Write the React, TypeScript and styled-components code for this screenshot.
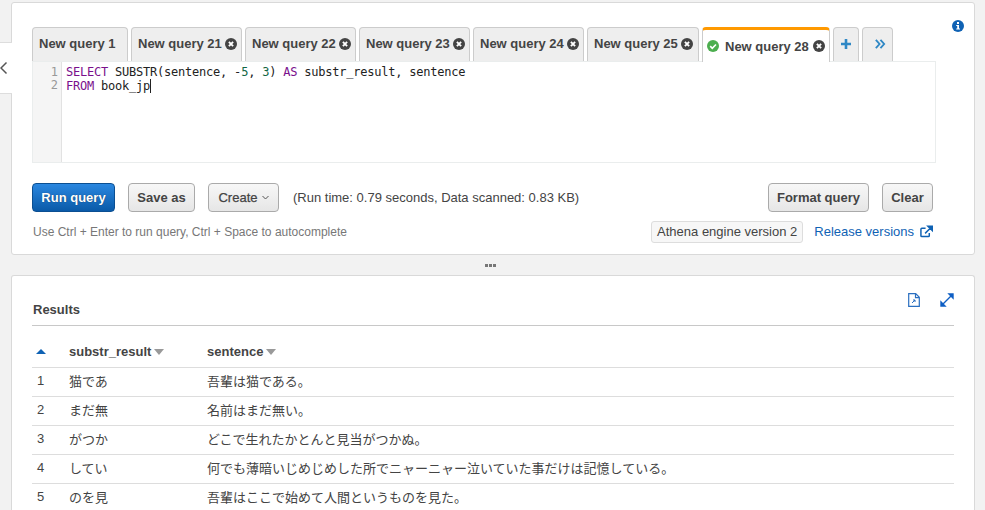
import React from "react";
import styled, { createGlobalStyle } from "styled-components";

const Global = createGlobalStyle`
  html, body { margin: 0; padding: 0; background: #f2f2f2; overflow: hidden; }
  body { font-family: "Liberation Sans", Arial, "Noto Sans CJK JP", sans-serif; color: #444; }
  * { box-sizing: border-box; }
`;
const Page = styled.div`
  position: relative; width: 985px; height: 510px; overflow: hidden;
  padding: 2px 10px 0 11px; display: flex; flex-direction: column;
`;
const SideToggle = styled.div`
  position: absolute; left: 0; top: 42px; width: 12px; height: 52px; background: #fff; z-index: 2;
  border-top: 1px solid #ddd; border-bottom: 1px solid #ddd;
  display: flex; align-items: center; color: #555;
`;
const Card = styled.section`
  position: relative; background: #fff; border: 1px solid #d9d9d9; border-radius: 3px;
`;
const QueryCard = styled(Card)`
  height: 253px; padding: 24px 38px 0 20px; flex: none;
`;
const ResultCard = styled(Card)`
  flex: 1; padding: 0 20px; border-bottom: 0; border-radius: 3px 3px 0 0;
`;
const InfoIcon = styled.div`
  position: absolute; right: 10px; top: 17px; display: flex;
`;
const Tabs = styled.div`
  display: flex; height: 34px; gap: 3px; align-items: stretch;
`;
const Tab = styled.div<{ $w: number; $active?: boolean }>`
  width: ${p => p.$w}px; display: flex; align-items: center; gap: 3px;
  padding: ${p => (p.$active ? "0 0 0 4px" : "0 0 2px 6px")};
  background: ${p => (p.$active ? "#fff" : "#eee")};
  border: 1px solid #ccc; border-bottom: 0; border-radius: 4px 4px 0 0;
  ${p => p.$active ? "border-top: 3px solid #f90; margin-bottom: -1px; z-index: 1;" : ""}
  font-size: 13px; font-weight: 700; color: #444;
  white-space: nowrap;
`;
const ActiveLabel = styled.span`
  margin-right: 1px;
`;
const StatusIcon = styled.svg`
  flex: none; margin-right: 3px;
`;
const PlainIcon = styled.svg<{ $ml?: number }>`
  flex: none; margin-left: ${p => p.$ml ?? 0}px;
`;
const Editor = styled.div`
  height: 102px; width: 904px; border: 1px solid #eaeded; display: flex;
  font-family: "DejaVu Sans Mono", "Liberation Mono", monospace; font-size: 12px; line-height: 13px;
`;
const Gutter = styled.div`
  width: 29px; background: #f5f5f5; border-right: 1px solid #e2e2e2; color: #999;
  text-align: right; padding: 4px 3px 0 0;
`;
const Code = styled.div`
  padding: 4px 0 0 4px; color: #222; white-space: pre; letter-spacing: -0.22px;
`;
const Kw = styled.span`color: #7a0f8c;`;
const Num = styled.span`color: #116644;`;
const Caret = styled.span`
  display: inline-block; width: 1px; height: 14px; background: #222; vertical-align: -3px;
`;
const ActionRow = styled.div`
  display: flex; align-items: center; margin-top: 20px; height: 29px; width: 901px;
`;
const Btn = styled.button<{ $w: number; $primary?: boolean }>`
  width: ${p => p.$w}px; height: 29px; padding: 0; border-radius: 4px; font: 700 13px "Liberation Sans", sans-serif;
  display: flex; align-items: center; justify-content: center; gap: 4px;
  ${p => p.$primary
    ? "color:#fff;background:linear-gradient(#2a87e0,#0a5aa8);border:1px solid #0b4f92;text-shadow:0 0 1px #0008;"
    : "color:#444;background:linear-gradient(#f7f7f7,#e6e6e6);border:1px solid #aaa;"}
`;
const CreateBtn = styled(Btn)`font-weight: 400; -webkit-text-stroke: 0.25px #444;`;
const RunInfo = styled.span`font-size: 13px; color: #444; margin-left: 14px;`;
const Gap = styled.div<{ $w: number }>`width: ${p => p.$w}px; flex: none;`;
const Spacer = styled.div`flex: 1;`;
const HintRow = styled.div`
  display: flex; align-items: center; margin-top: 6px; height: 27px; width: 901px; padding-left: 1px;
`;
const Hint = styled.span`font-size: 12px; color: #777;`;
const Badge = styled.span`
  font-size: 13px; height: 22px; padding: 0 5px; display: flex; align-items: center; color: #444;
  background: #f7f7f7; border: 1px solid #ddd; border-radius: 3px;
`;
const Link = styled.a`
  font-size: 13px; color: #0f62b4; margin-left: 11px; display: flex; align-items: center; gap: 6px;
`;
const Handle = styled.div`
  height: 20px; flex: none; display: flex; align-items: center; justify-content: center;
  gap: 1px; padding-right: 5px;
`;
const Dot = styled.i`width: 3px; height: 3px; background: #777; display: block;`;
const ResultHead = styled.div`
  position: relative; height: 50px; border-bottom: 1px solid #c8c8c8; display: flex; align-items: flex-end;
  padding-bottom: 8px; padding-left: 1px;
`;
const ResultTitle = styled.h2`margin: 0; font-size: 13px; font-weight: 700; color: #444;`;
const HeadIcons = styled.div`
  position: absolute; right: 0; top: 17px; display: flex; gap: 20px;
`;
const Table = styled.table`
  width: 100%; border-collapse: collapse; table-layout: fixed; font-size: 13px; color: #444;
  font-family: "Liberation Sans", "Noto Sans CJK JP", sans-serif;
`;
const Th = styled.th<{ $w?: number }>`
  ${p => (p.$w ? `width: ${p.$w}px;` : "")}
  height: 41px; padding: 11px 0 0 0; text-align: left; font-weight: 700; font-size: 13px;
  border-bottom: 1px solid #ddd;
`;
const Td = styled.td`
  height: 29px; padding: 0 0 2px; border-bottom: 1px solid #ddd;
`;
const IndexCell = styled(Td)`padding-left: 5px;`;
const SortDown = styled.span`
  display: inline-block; margin-left: 3px; border: 5px solid transparent; border-top: 6px solid #999;
  border-bottom: 0; vertical-align: 1px;
`;
const SortUp = styled.span`
  display: block; margin-left: 4px; width: 0; border: 5px solid transparent; border-bottom: 5px solid #0f62b4;
  border-top: 0;
`;

const CloseIcon = () => (
  <PlainIcon width="12" height="12" viewBox="0 0 12 12">
    <circle cx="6" cy="6" r="6" fill="#444" />
    <path d="M3.9 3.9l4.2 4.2M8.1 3.9L3.9 8.1" stroke="#fff" strokeWidth="1.9" />
  </PlainIcon>
);

const rows = [
  ["猫であ", "吾輩は猫である。"],
  ["まだ無", "名前はまだ無い。"],
  ["がつか", "どこで生れたかとんと見当がつかぬ。"],
  ["してい", "何でも薄暗いじめじめした所でニャーニャー泣いていた事だけは記憶している。"],
  ["のを見", "吾輩はここで始めて人間というものを見た。"],
];
const tabs: [string, number][] = [
  ["New query 21", 111], ["New query 22", 111], ["New query 23", 111], ["New query 24", 111], ["New query 25", 112],
];

export default function App() {
  return (
    <Page>
      <Global />
      <SideToggle>
        <svg width="9" height="14" viewBox="0 0 9 14"><path d="M6.5 1.5L1 7l5.5 5.5" fill="none" stroke="#555" strokeWidth="1.5" /></svg>
      </SideToggle>
      <QueryCard>
        <InfoIcon>
          <svg width="12" height="12" viewBox="0 0 12 12">
            <circle cx="6" cy="6" r="6" fill="#0f62b4" />
            <rect x="5" y="2" width="2" height="2" fill="#fff" />
            <path d="M4.2 5h2.8v3.6h1v1H4.2v-1h1V6h-1z" fill="#fff" />
          </svg>
        </InfoIcon>
        <Tabs>
          <Tab $w={96}>New query 1</Tab>
          {tabs.map(([t, w]) => (
            <Tab key={t} $w={w}>{t}<CloseIcon /></Tab>
          ))}
          <Tab $w={128} $active>
            <StatusIcon width="12" height="12" viewBox="0 0 13 13">
              <circle cx="6.5" cy="6.5" r="6.5" fill="#4cae4f" />
              <path d="M3.5 6.7l2.2 2.2 4-4" fill="none" stroke="#fff" strokeWidth="1.8" />
            </StatusIcon>
            <ActiveLabel>New query 28</ActiveLabel><CloseIcon />
          </Tab>
          <Tab $w={26}>
            <PlainIcon width="12" height="12" viewBox="0 0 12 12"><path d="M6 1v10M1 6h10" stroke="#2f88c5" strokeWidth="2.6" /></PlainIcon>
          </Tab>
          <Tab $w={31}>
            <PlainIcon $ml={5} width="12" height="12" viewBox="0 0 13 12"><path d="M2 1.5L6 6l-4 4.5M7 1.5L11 6l-4 4.5" fill="none" stroke="#2f88c5" strokeWidth="2" /></PlainIcon>
          </Tab>
        </Tabs>
        <Editor>
          <Gutter>1<br />2</Gutter>
          <Code>
            <Kw>SELECT</Kw> SUBSTR(sentence, -<Num>5</Num>, <Num>3</Num>) <Kw>AS</Kw> substr_result, sentence{"\n"}
            <Kw>FROM</Kw> book_jp<Caret />
          </Code>
        </Editor>
        <ActionRow>
          <Btn $w={83} $primary>Run query</Btn>
          <Gap $w={13} />
          <Btn $w={67}>Save as</Btn>
          <Gap $w={13} />
          <CreateBtn $w={71}>Create
            <svg width="7" height="5" viewBox="0 0 7 5"><path d="M.5 1l3 3 3-3" fill="none" stroke="#555" /></svg>
          </CreateBtn>
          <RunInfo>(Run time: 0.79 seconds, Data scanned: 0.83 KB)</RunInfo>
          <Spacer />
          <Btn $w={101}>Format query</Btn>
          <Gap $w={13} />
          <Btn $w={51}>Clear</Btn>
        </ActionRow>
        <HintRow>
          <Hint>Use Ctrl + Enter to run query, Ctrl + Space to autocomplete</Hint>
          <Spacer />
          <Badge>Athena engine version 2</Badge>
          <Link>Release versions
            <svg width="13" height="13" viewBox="0 0 14 13"><path d="M10 8v3a1 1 0 0 1-1 1H2a1 1 0 0 1-1-1V4a1 1 0 0 1 1-1h4" fill="none" stroke="#0f62b4" strokeWidth="1.6" /><path d="M5.5 8.5L11 3M8.5 .8H13.2V5.5z" stroke="#0f62b4" strokeWidth="1.6" fill="#0f62b4" /></svg>
          </Link>
        </HintRow>
      </QueryCard>
      <Handle><Dot /><Dot /><Dot /></Handle>
      <ResultCard>
        <ResultHead>
          <ResultTitle>Results</ResultTitle>
          <HeadIcons>
            <svg width="12" height="14" viewBox="0 0 12 14"><path d="M.7.7h7l3.6 3.6v9H.7zM7.5.7v4h4" fill="none" stroke="#2a6fc0" strokeWidth="1.2" /><path d="M4 10l3-3M5 7h2v2" fill="none" stroke="#2a6fc0" /></svg>
            <svg width="14" height="14" viewBox="0 0 14 14"><path d="M9 1h4v4zM1 9v4h4zM3.5 10.5l7-7" fill="#0f5fc4" stroke="#0f5fc4" strokeWidth="1.4" /></svg>
          </HeadIcons>
        </ResultHead>
        <Table>
          <thead>
            <tr>
              <Th $w={37}><SortUp /></Th>
              <Th $w={138}>substr_result<SortDown /></Th>
              <Th>sentence<SortDown /></Th>
            </tr>
          </thead>
          <tbody>
            {rows.map((r, i) => (
              <tr key={i}>
                <IndexCell>{i + 1}</IndexCell>
                <Td>{r[0]}</Td>
                <Td>{r[1]}</Td>
              </tr>
            ))}
          </tbody>
        </Table>
      </ResultCard>
    </Page>
  );
}
